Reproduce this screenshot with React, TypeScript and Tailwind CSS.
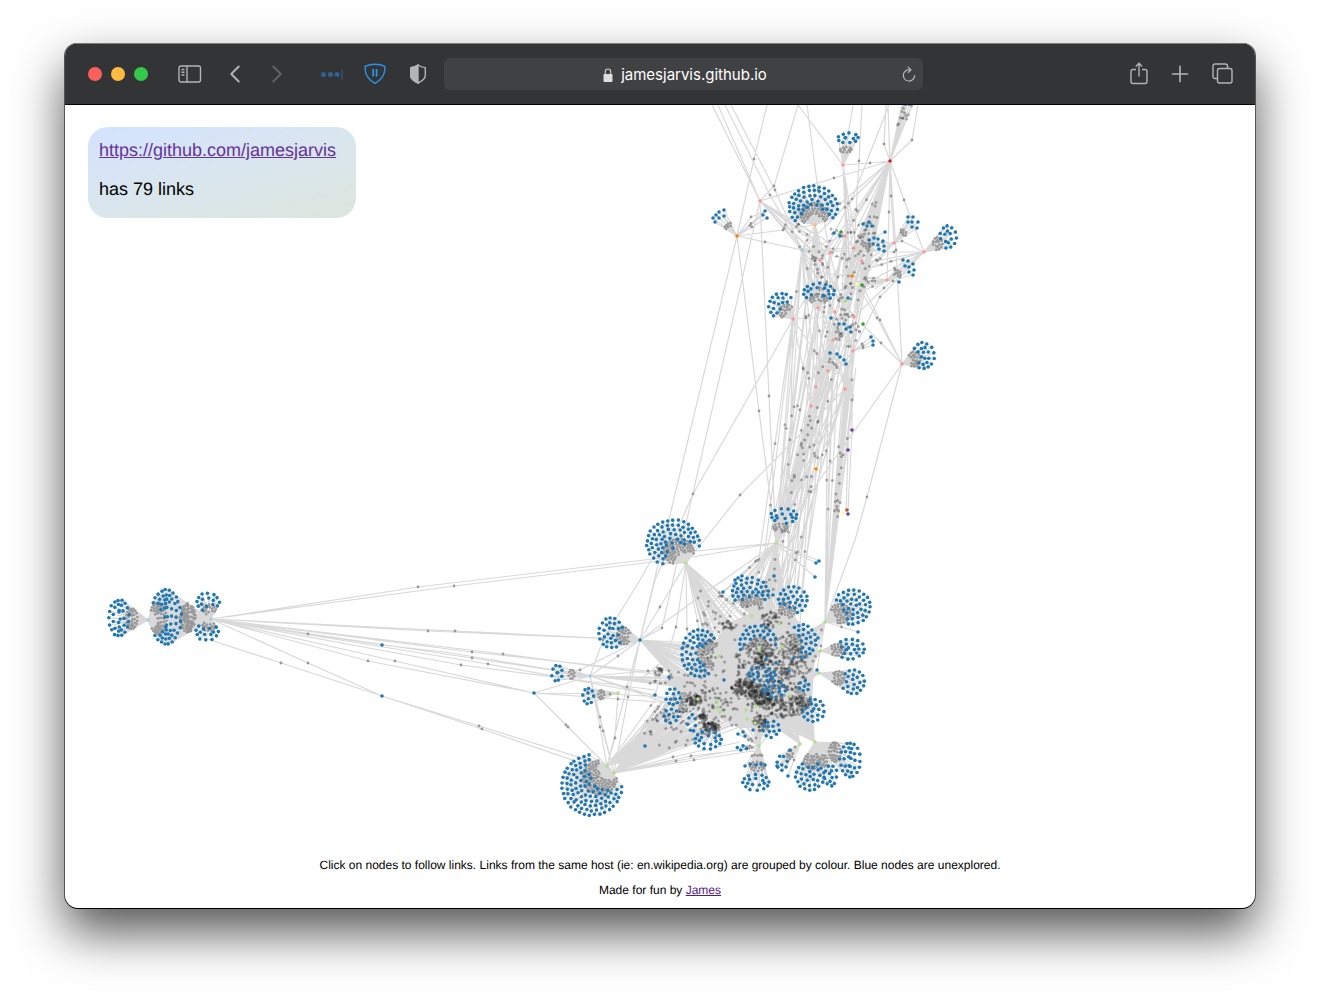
import { ChevronLeft, ChevronRight, Plus } from "lucide-react";

type Point = [number, number];
type Link = [number, number, number, number];

const COLORS = {
  unexplored: "#1f78b4",
  pink: "#fb9a99",
  red: "#e31a1c",
  orange: "#ff7f00",
  sand: "#fdbf6f",
  green: "#33a02c",
  lime: "#b2df8a",
  sky: "#a6cee3",
  yellow: "#ffff99",
  purple: "#6a3d9a",
  brown: "#b15928",
};

// Small seeded generator, so the layout is the same on every load
function createRandom(seed: number) {
  let state = seed;
  return () => {
    state = (state + 0x6d2b79f5) | 0;
    let t = Math.imul(state ^ (state >>> 15), 1 | state);
    t = (t + Math.imul(t ^ (t >>> 7), 61 | t)) ^ t;
    return ((t ^ (t >>> 14)) >>> 0) / 4294967296;
  };
}

const random = createRandom(79);

// Hub x, hub y, centre x, centre y, radius x, radius y, distance kept from the hub
const FANS: number[][] = [
  [815, 225, 813, 207, 24, 21, 17],
  [843, 165, 848, 138, 10, 5, 22],
  [793, 319, 781, 306, 12, 13, 16],
  [818, 308, 819, 292, 15, 9, 12],
  [924, 252, 948, 237, 8, 11, 21],
  [902, 364, 923, 356, 11, 13, 16],
  [776, 543, 784, 516, 13, 7, 21],
  [686, 563, 673, 543, 26, 23, 19],
  [640, 640, 611, 633, 12, 15, 20],
  [590, 676, 557, 673, 5, 8, 28],
  [618, 693, 588, 696, 5, 8, 24],
  [610, 768, 592, 785, 30, 30, 21],
  [148, 620, 119, 618, 10, 18, 16],
  [148, 620, 166, 617, 15, 27, 14],
  [211, 619, 208, 602, 11, 9, 12],
  [211, 619, 207, 632, 11, 8, 9],
  [752, 616, 750, 592, 18, 14, 18],
  [779, 624, 793, 600, 14, 13, 18],
  [825, 622, 852, 607, 18, 17, 22],
  [820, 651, 850, 649, 14, 10, 22],
  [819, 673, 853, 682, 11, 12, 26],
  [782, 647, 802, 641, 14, 16, 19],
  [759, 654, 758, 643, 18, 17, 17],
  [719, 656, 700, 653, 18, 23, 17],
  [790, 696, 813, 710, 11, 11, 18],
  [755, 723, 771, 729, 8, 8, 8],
  [759, 746, 756, 782, 13, 8, 28],
  [815, 742, 850, 760, 10, 17, 24],
  [815, 742, 831, 776, 6, 10, 22],
  [815, 742, 810, 776, 14, 14, 22],
  [698, 699, 673, 697, 7, 8, 16],
  [698, 699, 671, 716, 7, 7, 14],
  [717, 712, 708, 740, 13, 9, 18],
  [717, 712, 692, 723, 4, 8, 18],
  [747, 719, 774, 689, 11, 8, 20],
  [756, 706, 762, 674, 13, 7, 22],
  [790, 696, 804, 686, 5, 5, 4],
  [759, 746, 742, 748, 5, 2, 4],
  [800, 744, 782, 763, 5, 7, 12],
];

// Hub followed by the unexplored pages that hang off it
const SMALL_FANS: { hub: Point; nodes: Point[] }[] = [
  { hub: [737, 236], nodes: [[724, 210], [719, 212], [716, 215], [713, 218], [724, 216], [719, 218], [715, 222]] },
  { hub: [737, 236], nodes: [[765, 211], [763, 215], [767, 218]] },
  { hub: [894, 243], nodes: [[908, 217], [913, 217], [908, 222], [912, 222], [918, 222], [912, 227], [917, 228]] },
  { hub: [887, 280], nodes: [[903, 260], [908, 261], [913, 264], [905, 266], [909, 267], [914, 270], [909, 272], [913, 275], [899, 282]] },
  { hub: [853, 351], nodes: [[871, 337], [873, 341], [873, 345]] },
  { hub: [828, 371], nodes: [[830, 353], [837, 354], [840, 357], [844, 360], [846, 364]] },
  { hub: [833, 340], nodes: [[839, 324], [844, 324], [850, 327], [846, 329], [851, 332]] },
  { hub: [854, 248], nodes: [[863, 224], [869, 222], [867, 226], [872, 226], [885, 232]] },
  { hub: [854, 248], nodes: [[869, 240], [874, 238], [878, 239], [883, 241], [873, 244], [878, 245], [884, 246], [879, 249], [884, 251]] },
  { hub: [845, 236], nodes: [[834, 233], [840, 236], [848, 298], [831, 318]] },
  { hub: [776, 543], nodes: [[816, 563], [819, 561], [815, 577], [774, 576], [773, 595], [742, 576], [738, 578], [735, 580], [723, 592]] },
  { hub: [759, 746], nodes: [[745, 766], [750, 764], [756, 765], [761, 764], [765, 765], [738, 734], [743, 732], [745, 736], [753, 730]] },
  { hub: [800, 744], nodes: [[788, 776], [790, 750], [777, 766]] },
  { hub: [825, 622], nodes: [[858, 632], [818, 638], [817, 670]] },
];

const HUBS: [number, number, string][] = [
  [890, 161, COLORS.red],
  [843, 165, COLORS.pink],
  [760, 201, COLORS.pink],
  [737, 236, COLORS.orange],
  [815, 225, COLORS.sand],
  [802, 250, COLORS.sky],
  [820, 260, COLORS.pink],
  [830, 253, COLORS.pink],
  [854, 248, COLORS.pink],
  [862, 261, COLORS.pink],
  [845, 236, COLORS.pink],
  [894, 243, COLORS.pink],
  [924, 252, COLORS.pink],
  [887, 280, COLORS.pink],
  [793, 319, COLORS.pink],
  [818, 308, COLORS.pink],
  [835, 312, COLORS.pink],
  [854, 317, COLORS.pink],
  [833, 340, COLORS.pink],
  [853, 351, COLORS.pink],
  [828, 371, COLORS.pink],
  [902, 364, COLORS.pink],
  [816, 387, COLORS.pink],
  [845, 389, COLORS.pink],
  [811, 406, COLORS.pink],
  [841, 232, COLORS.green],
  [862, 285, COLORS.green],
  [863, 324, COLORS.green],
  [857, 284, COLORS.yellow],
  [852, 276, COLORS.orange],
  [845, 301, COLORS.lime],
  [852, 430, COLORS.purple],
  [848, 450, COLORS.purple],
  [816, 469, COLORS.orange],
  [843, 513, COLORS.yellow],
  [847, 510, COLORS.brown],
  [848, 514, COLORS.purple],
  [776, 543, COLORS.lime],
  [686, 563, COLORS.lime],
  [752, 616, COLORS.lime],
  [779, 624, COLORS.lime],
  [782, 647, COLORS.lime],
  [759, 650, COLORS.lime],
  [719, 656, COLORS.lime],
  [698, 699, COLORS.lime],
  [717, 701, COLORS.lime],
  [717, 708, COLORS.lime],
  [720, 712, COLORS.lime],
  [746, 710, COLORS.lime],
  [756, 706, COLORS.lime],
  [747, 719, COLORS.lime],
  [755, 723, COLORS.lime],
  [790, 696, COLORS.lime],
  [819, 673, COLORS.lime],
  [820, 651, COLORS.lime],
  [825, 622, COLORS.lime],
  [815, 742, COLORS.lime],
  [800, 744, COLORS.lime],
  [759, 746, COLORS.lime],
  [618, 693, COLORS.lime],
  [607, 766, COLORS.lime],
  [614, 773, COLORS.lime],
  [590, 676, COLORS.sky],
  [148, 620, COLORS.sky],
  [211, 619, COLORS.sky],
  [640, 640, COLORS.unexplored],
  [534, 693, COLORS.unexplored],
  [382, 645, COLORS.unexplored],
  [382, 696, COLORS.unexplored],
  [669, 677, COLORS.unexplored],
  [655, 695, COLORS.unexplored],
  [645, 746, COLORS.unexplored],
  [724, 680, COLORS.unexplored],
  [766, 659, COLORS.unexplored],
  [776, 663, COLORS.unexplored],
  [793, 659, COLORS.unexplored],
  [789, 671, COLORS.unexplored],
  [905, 104, COLORS.unexplored],
  [909, 104, COLORS.unexplored],
];

// Long chains: hub, small grey node in between, hub
const CHAINS: Point[][] = [
  [[211, 619], [418, 587], [686, 555]],
  [[211, 619], [454, 586], [686, 558]],
  [[686, 558], [776, 543]],
  [[686, 552], [776, 543]],
  [[211, 619], [428, 631], [640, 640]],
  [[211, 619], [455, 631], [640, 640]],
  [[211, 619], [308, 634], [382, 645], [445, 652], [590, 676]],
  [[211, 619], [472, 652], [655, 672]],
  [[211, 619], [503, 654], [698, 680]],
  [[211, 619], [472, 658], [590, 676]],
  [[211, 619], [488, 664], [655, 695]],
  [[211, 619], [461, 665], [655, 690]],
  [[211, 619], [395, 661], [534, 693]],
  [[211, 619], [368, 661], [534, 693]],
  [[211, 619], [308, 663], [382, 696]],
  [[195, 635], [281, 663], [382, 696]],
  [[382, 696], [479, 726], [607, 766]],
  [[382, 696], [482, 729], [607, 772]],
  [[534, 693], [566, 725], [607, 766]],
  [[534, 693], [568, 727], [607, 766]],
  [[534, 693], [590, 676]],
  [[534, 693], [610, 694], [698, 699]],
  [[534, 693], [618, 699], [698, 705]],
  [[590, 676], [600, 717], [614, 773]],
  [[590, 676], [603, 731], [614, 773]],
  [[590, 676], [600, 727], [607, 766]],
  [[618, 693], [615, 738], [607, 766]],
  [[640, 640], [618, 656], [590, 676]],
  [[640, 640], [580, 670], [557, 673]],
  [[590, 676], [603, 640], [640, 580], [668, 530]],
  [[640, 640], [627, 687], [607, 766]],
  [[640, 640], [628, 697], [614, 773]],
  [[590, 676], [648, 671], [719, 668]],
  [[686, 563], [660, 607], [640, 640]],
  [[686, 563], [676, 627], [655, 695]],
  [[686, 563], [687, 629], [698, 699]],
  [[776, 543], [698, 598], [640, 640]],
  [[776, 543], [715, 619], [640, 680], [590, 676]],
  [[614, 773], [673, 757], [740, 742]],
  [[614, 773], [676, 761], [759, 746]],
  [[614, 773], [691, 756], [759, 748]],
  [[614, 773], [694, 760], [759, 750]],
  [[737, 236], [640, 640]],
  [[760, 201], [662, 628], [640, 640]],
  [[793, 319], [693, 494], [655, 580], [640, 640]],
  [[845, 389], [740, 495], [686, 563]],
  [[902, 364], [811, 492], [776, 543]],
  [[902, 364], [867, 497], [855, 540], [825, 622]],
  [[737, 236], [759, 411], [776, 543]],
  [[760, 201], [769, 396], [776, 543]],
  [[737, 236], [754, 159], [767, 105]],
  [[760, 201], [774, 186], [798, 105]],
  [[712, 105], [760, 201]],
  [[718, 105], [760, 201]],
  [[725, 105], [770, 195], [802, 250]],
  [[731, 105], [775, 190], [802, 250]],
  [[798, 105], [843, 165]],
  [[807, 105], [818, 190], [830, 253]],
  [[853, 105], [843, 165]],
  [[862, 105], [859, 161], [854, 248]],
  [[886, 105], [884, 144], [890, 161]],
  [[889, 105], [852, 199], [820, 260]],
  [[888, 105], [891, 196], [894, 243]],
  [[918, 105], [912, 140], [890, 161]],
  [[843, 165], [870, 163], [890, 161]],
  [[760, 201], [834, 178], [890, 161]],
  [[890, 161], [904, 200], [924, 252]],
  [[890, 161], [896, 250], [902, 364]],
  [[890, 161], [889, 212], [887, 280]],
  [[737, 236], [751, 217], [763, 212]],
  [[737, 236], [783, 230], [815, 225]],
  [[737, 236], [765, 242], [802, 250]],
  [[802, 250], [894, 252], [924, 252]],
  [[894, 243], [902, 241], [924, 252]],
  [[862, 324], [881, 343], [902, 364]],
  [[857, 284], [877, 318], [902, 364]],
  [[862, 285], [880, 320], [902, 364]],
  [[793, 319], [806, 318], [854, 317]],
  [[924, 252], [884, 288], [854, 317]],
  [[924, 252], [880, 297], [853, 351]],
  [[852, 351], [852, 400], [852, 430]],
  [[854, 317], [852, 380], [848, 450]],
  [[852, 430], [848, 510]],
  [[848, 450], [846, 512]],
];

const links: Link[] = [];
const blueDots: Point[] = [];
const fanDots: Point[] = [];
const greyDots: Point[] = [];

function connect(from: Point, to: Point, at = 0.5, dots = greyDots) {
  links.push([from[0], from[1], to[0], to[1]]);
  dots.push([from[0] + (to[0] - from[0]) * at, from[1] + (to[1] - from[1]) * at]);
}

function pointIn(cx: number, cy: number, rx: number, ry: number): Point {
  const angle = random() * Math.PI * 2;
  const reach = Math.sqrt(random());
  return [cx + Math.cos(angle) * reach * rx, cy + Math.sin(angle) * reach * ry];
}

function scatter(cx: number, cy: number, rx: number, ry: number, count: number) {
  for (let i = 0; i < count; i++) greyDots.push(pointIn(cx, cy, rx, ry));
}

// Links from one hub to `count` pages spread over an ellipse
function spread(hub: Point, cx: number, cy: number, rx: number, ry: number, count: number, near = 0.4) {
  for (let i = 0; i < count; i++) {
    connect(hub, pointIn(cx, cy, rx, ry), near + random() * 0.4);
  }
}

// Pages sit on rings, from the rim of the cluster inwards
FANS.forEach(([hx, hy, cx, cy, rx, ry, gap]) => {
  for (let inset = 0; inset <= Math.min(rx, ry); inset += 4.6) {
    const a = rx - inset;
    const b = ry - inset;
    const count = Math.max(1, Math.floor((Math.PI * (a + b)) / 5.1));
    const start = random() * Math.PI;
    for (let i = 0; i < count; i++) {
      const angle = start + (i / count) * Math.PI * 2;
      const x = cx + Math.cos(angle) * a + (random() - 0.5) * 1.2;
      const y = cy + Math.sin(angle) * b + (random() - 0.5) * 1.2;
      if (Math.hypot(x - hx, y - hy) < gap) continue;
      blueDots.push([x, y]);
      connect([hx, hy], [x, y], 0.56, fanDots);
    }
  }
});

// The big cluster on the left is shared by the hubs on both of its sides
for (let i = 0; i < 110; i++) {
  const page = pointIn(166, 617, 15, 28);
  connect([211, 619], page, 0.52, fanDots);
}

SMALL_FANS.forEach(({ hub, nodes }) =>
  nodes.forEach((node) => {
    blueDots.push(node);
    connect(hub, node, 0.5, fanDots);
  })
);

CHAINS.forEach((chain) =>
  chain.forEach((point, i) => {
    if (i === 0) return;
    links.push([chain[i - 1][0], chain[i - 1][1], point[0], point[1]]);
    if (i === 1 && chain.length > 2) fanDots.push(point);
  })
);

// Traffic between the upper group and the lower one
const upper = HUBS.slice(4, 25).filter(([x, y]) => x < 870 && y > 220);
upper.forEach(([x, y], i) => {
  connect([x, y], [776, 543], 0.35 + random() * 0.4);
  connect([x, y], [772 + (i % 5) * 7, 600 + (i % 4) * 12], 0.3 + random() * 0.4);
  if (i % 2) connect([x, y], [750 + i, 616], 0.4 + random() * 0.3);
  if (x > 825) connect([x, y], [825, 622], 0.4 + random() * 0.3);
  connect([x, y], [890, 161], 0.3 + random() * 0.4);
  connect([x, y], [802, 250], 0.3 + random() * 0.4);
});
for (let i = 0; i < 16; i++) {
  const from = upper[Math.floor(random() * upper.length)];
  const to = upper[Math.floor(random() * upper.length)];
  connect([from[0], from[1]], [to[0], to[1]], 0.3 + random() * 0.4);
}
spread([825, 622], 851, 370, 5, 50, 12);
spread([776, 543], 828, 385, 14, 40, 10);
spread([890, 161], 852, 290, 12, 40, 20);
spread([890, 161], 910, 96, 8, 3, 16, 0.5);
spread([843, 165], 852, 270, 8, 30, 5);
spread([760, 201], 815, 250, 20, 18, 9);
spread([815, 225], 818, 290, 10, 16, 8);
spread([894, 243], 858, 262, 20, 28, 6);
spread([887, 280], 845, 285, 20, 28, 8);
spread([924, 252], 868, 270, 18, 22, 5);
scatter(838, 270, 34, 42, 36);
scatter(846, 328, 14, 20, 28);

// Core of the lower group
spread([686, 563], 745, 665, 40, 46, 36);
spread([640, 640], 730, 680, 45, 40, 40, 0.5);
spread([614, 773], 710, 705, 55, 28, 56, 0.6);
spread([607, 766], 690, 705, 40, 40, 26, 0.6);
spread([776, 543], 778, 640, 26, 60, 34, 0.6);
spread([776, 543], 730, 640, 40, 40, 10);
spread([825, 622], 780, 680, 30, 34, 20);
spread([820, 651], 770, 680, 36, 30, 16);
spread([819, 673], 770, 680, 36, 30, 16);
spread([815, 742], 765, 690, 36, 26, 30, 0.6);
spread([800, 744], 760, 690, 36, 20, 24, 0.6);
spread([759, 746], 755, 700, 40, 26, 20, 0.6);
spread([590, 676], 690, 695, 20, 18, 12, 0.6);
scatter(745, 688, 14, 9, 110);
scatter(760, 697, 11, 9, 90);
scatter(772, 665, 38, 30, 300);
scatter(785, 706, 22, 11, 130);
scatter(804, 700, 9, 7, 24);
scatter(764, 658, 11, 9, 60);
scatter(694, 700, 8, 6, 50);
scatter(711, 727, 8, 5, 50);
scatter(702, 718, 4, 4, 16);
scatter(760, 721, 6, 6, 30);
scatter(770, 620, 8, 10, 32);
scatter(729, 626, 8, 5, 20);
scatter(659, 672, 4, 5, 16);
scatter(714, 705, 22, 18, 50);

const linkPath = links
  .map(([x1, y1, x2, y2]) => `M${x1.toFixed(1)} ${y1.toFixed(1)}L${x2.toFixed(1)} ${y2.toFixed(1)}`)
  .join("");

function LinkGraph() {
  return (
    <svg viewBox="65 105 1190 750" className="block w-full" role="img" aria-label="Graph of linked pages">
      <path
        d="M725 625L752 612L790 612L816 640L812 700L815 742L790 728L740 728L690 705L665 680L700 670Z"
        fill="#d9d9d9"
      />
      <path d={linkPath} stroke="#d9d9d9" strokeWidth="1.2" fill="none" />
      <g fill="#999">
        {fanDots.map(([x, y], i) => (
          <circle key={i} cx={x} cy={y} r="1.4" />
        ))}
      </g>
      <g fill="#222" fillOpacity="0.34">
        {greyDots.map(([x, y], i) => (
          <circle key={i} cx={x} cy={y} r="1.5" />
        ))}
      </g>
      <g fill={COLORS.unexplored}>
        {blueDots.map(([x, y], i) => (
          <circle key={i} cx={x} cy={y} r="1.8" />
        ))}
      </g>
      {HUBS.map(([x, y, color], i) => (
        <circle key={i} cx={x} cy={y} r="1.8" fill={color} />
      ))}
    </svg>
  );
}

function SidebarIcon() {
  return (
    <svg width="24" height="18" viewBox="0 0 24 18" fill="none" stroke="currentColor" strokeWidth="1.4">
      <rect x="1" y="1" width="21.5" height="16" rx="2" />
      <path d="M9 1v16M3.5 4.5h3M3.5 7.3h3M3.5 10h3" />
    </svg>
  );
}

function DotsIcon() {
  return (
    <svg width="24" height="12" viewBox="0 0 24 12" fill="#2f6290">
      <circle cx="3.5" cy="6.5" r="2.5" />
      <circle cx="10.5" cy="6.5" r="2.5" />
      <circle cx="17" cy="6.5" r="2.5" />
      <path d="M21.5 1.5h1v10h-1z" />
    </svg>
  );
}

function BlockerIcon() {
  return (
    <svg width="22" height="22" viewBox="0 0 22 22" fill="none" stroke="#2b95ee" strokeWidth="1.4">
      <path d="M1.2 3.4C4.5 1.6 7.5 1.2 11 1.2s6.5.4 9.800 2.200c.2 4.200-.5 8-2.800 11-1.800 2.500-4.500 4.700-7 6-2.500-1.300-5.200-3.500-7-6-2.300-3-3-6.800-2.800-11Z" />
      <path d="M9.2 6v7.500M12.600 6v7.500" strokeWidth="1.8" />
    </svg>
  );
}

function PrivacyIcon() {
  return (
    <svg width="18" height="20" viewBox="0 0 18 20" fill="none" stroke="currentColor" strokeWidth="1.4">
      <path d="M9 1c2.300 1.500 4.800 2.300 7.300 2.600v8c0 3.300-3.300 5.600-7.300 7.400-4-1.800-7.300-4.100-7.300-7.400v-8C4.200 3.300 6.700 2.500 9 1Z" />
      <path d="M9 1v18c-4-1.800-7.300-4.100-7.300-7.400v-8C4.200 3.300 6.700 2.500 9 1Z" fill="currentColor" />
    </svg>
  );
}

function LockIcon() {
  return (
    <svg width="10" height="14" viewBox="0 0 10 14" fill="none">
      <path d="M2.300 7V3.700a2.700 2.700 0 0 1 5.400 0V7" stroke="#c8c8c9" strokeWidth="1.2" />
      <rect x="0.5" y="6" width="9" height="8" rx="1" fill="#dededf" />
    </svg>
  );
}

function ReloadIcon() {
  return (
    <svg width="14" height="16" viewBox="0 0 14 16" fill="none" stroke="currentColor" strokeWidth="1.2">
      <path d="M12.700 9.300A5.700 5.700 0 1 1 8.700 3.900" />
      <path d="M5.800 0.700l3.200 3.200-3.200 2.900" />
    </svg>
  );
}

function ShareIcon() {
  return (
    <svg width="18" height="23" viewBox="0 0 18 23" fill="none" stroke="currentColor" strokeWidth="1.4">
      <path d="M6 7.500H3A2 2 0 0 0 1 9.500v10a2 2 0 0 0 2 2h12a2 2 0 0 0 2-2v-10a2 2 0 0 0-2-2h-3" />
      <path d="M9 14.500V1.500M5.800 4.500L9 1.300l3.200 3.200" />
    </svg>
  );
}

function TabsIcon() {
  return (
    <svg width="21" height="21" viewBox="0 0 21 21" fill="none" stroke="currentColor" strokeWidth="1.4">
      <rect x="5.5" y="5.5" width="14.5" height="14.5" rx="2" />
      <path d="M5.500 15.500H3a2 2 0 0 1-2-2V3a2 2 0 0 1 2-2h10.500a2 2 0 0 1 2 2v2.500" />
    </svg>
  );
}

function Toolbar() {
  return (
    <header className="flex h-[62px] items-center border-b border-black bg-[#333436] text-[#b4b4b6] shadow-[inset_0_1px_0_#7b7b7b]">
      <div className="flex w-[379px] shrink-0 items-center pl-[23px]">
        <div className="flex gap-[9px]">
          <button aria-label="Close" className="size-[14px] rounded-full bg-[#fc605c]" />
          <button aria-label="Minimise" className="size-[14px] rounded-full bg-[#fdbc40]" />
          <button aria-label="Zoom" className="size-[14px] rounded-full bg-[#34c84a]" />
        </div>
        <button aria-label="Sidebar" className="ml-[30px]">
          <SidebarIcon />
        </button>
        <button aria-label="Back" className="ml-[18px]">
          <ChevronLeft size={30} strokeWidth={1.5} />
        </button>
        <button aria-label="Forward" className="ml-[12px] text-[#626365]">
          <ChevronRight size={30} strokeWidth={1.5} />
        </button>
        <button aria-label="Passwords" className="ml-[28px]">
          <DotsIcon />
        </button>
        <button aria-label="Blocker" className="ml-[20px]">
          <BlockerIcon />
        </button>
        <button aria-label="Privacy report" className="ml-[23px]">
          <PrivacyIcon />
        </button>
      </div>
      <div className="flex h-8 flex-1 items-center rounded-md bg-[#404143] px-[7px]">
        <label className="flex flex-1 items-center justify-center gap-2 pt-[3px] pl-[17px]">
          <LockIcon />
          <input
            aria-label="Address"
            defaultValue="jamesjarvis.github.io"
            className="field-sizing-content bg-transparent font-['Inter',sans-serif] text-[15px] text-white outline-none"
          />
        </label>
        <button aria-label="Reload">
          <ReloadIcon />
        </button>
      </div>
      <div className="flex w-[332px] shrink-0 items-center justify-end gap-[19px] pr-[22px]">
        <button aria-label="Share">
          <ShareIcon />
        </button>
        <button aria-label="New tab">
          <Plus size={26} strokeWidth={1.5} />
        </button>
        <button aria-label="Tab overview">
          <TabsIcon />
        </button>
      </div>
    </header>
  );
}

export default function App() {
  return (
    <div className="min-h-screen overflow-hidden bg-white px-[65px] pt-[43px] pb-[85px] font-['Liberation_Sans',Arial,sans-serif] text-black [text-rendering:geometricPrecision]">
      <div className="overflow-hidden rounded-[13px] bg-white shadow-[0_1px_0_#000,-1px_0_0_#555,1px_0_0_#555,0_24px_50px_rgba(0,0,0,0.68)]">
        <Toolbar />
        <main className="relative">
          <LinkGraph />
          <div className="absolute top-[22px] left-[23px] flex min-w-[268px] flex-col gap-[17px] rounded-[20px] bg-linear-[165deg,#d3e3ff,#d9e6ee_50%,#dde6de] px-[11px] pt-[12px] pb-[18px] text-[18px] leading-[22px]">
            <a href="https://github.com/jamesjarvis" className="text-[#663399] underline">
              https://github.com/jamesjarvis
            </a>
            <p>has 79 links</p>
          </div>
          <footer className="flex flex-col items-center gap-[5px] pb-2 text-center text-[12px] leading-[20px]">
            <p>
              Click on nodes to follow links. Links from the same host (ie: en.wikipedia.org) are grouped by colour.
              Blue nodes are unexplored.
            </p>
            <p>
              Made for fun by{" "}
              <a href="https://github.com/jamesjarvis" className="text-[#551a8b] underline">
                James
              </a>
            </p>
          </footer>
        </main>
      </div>
    </div>
  );
}
